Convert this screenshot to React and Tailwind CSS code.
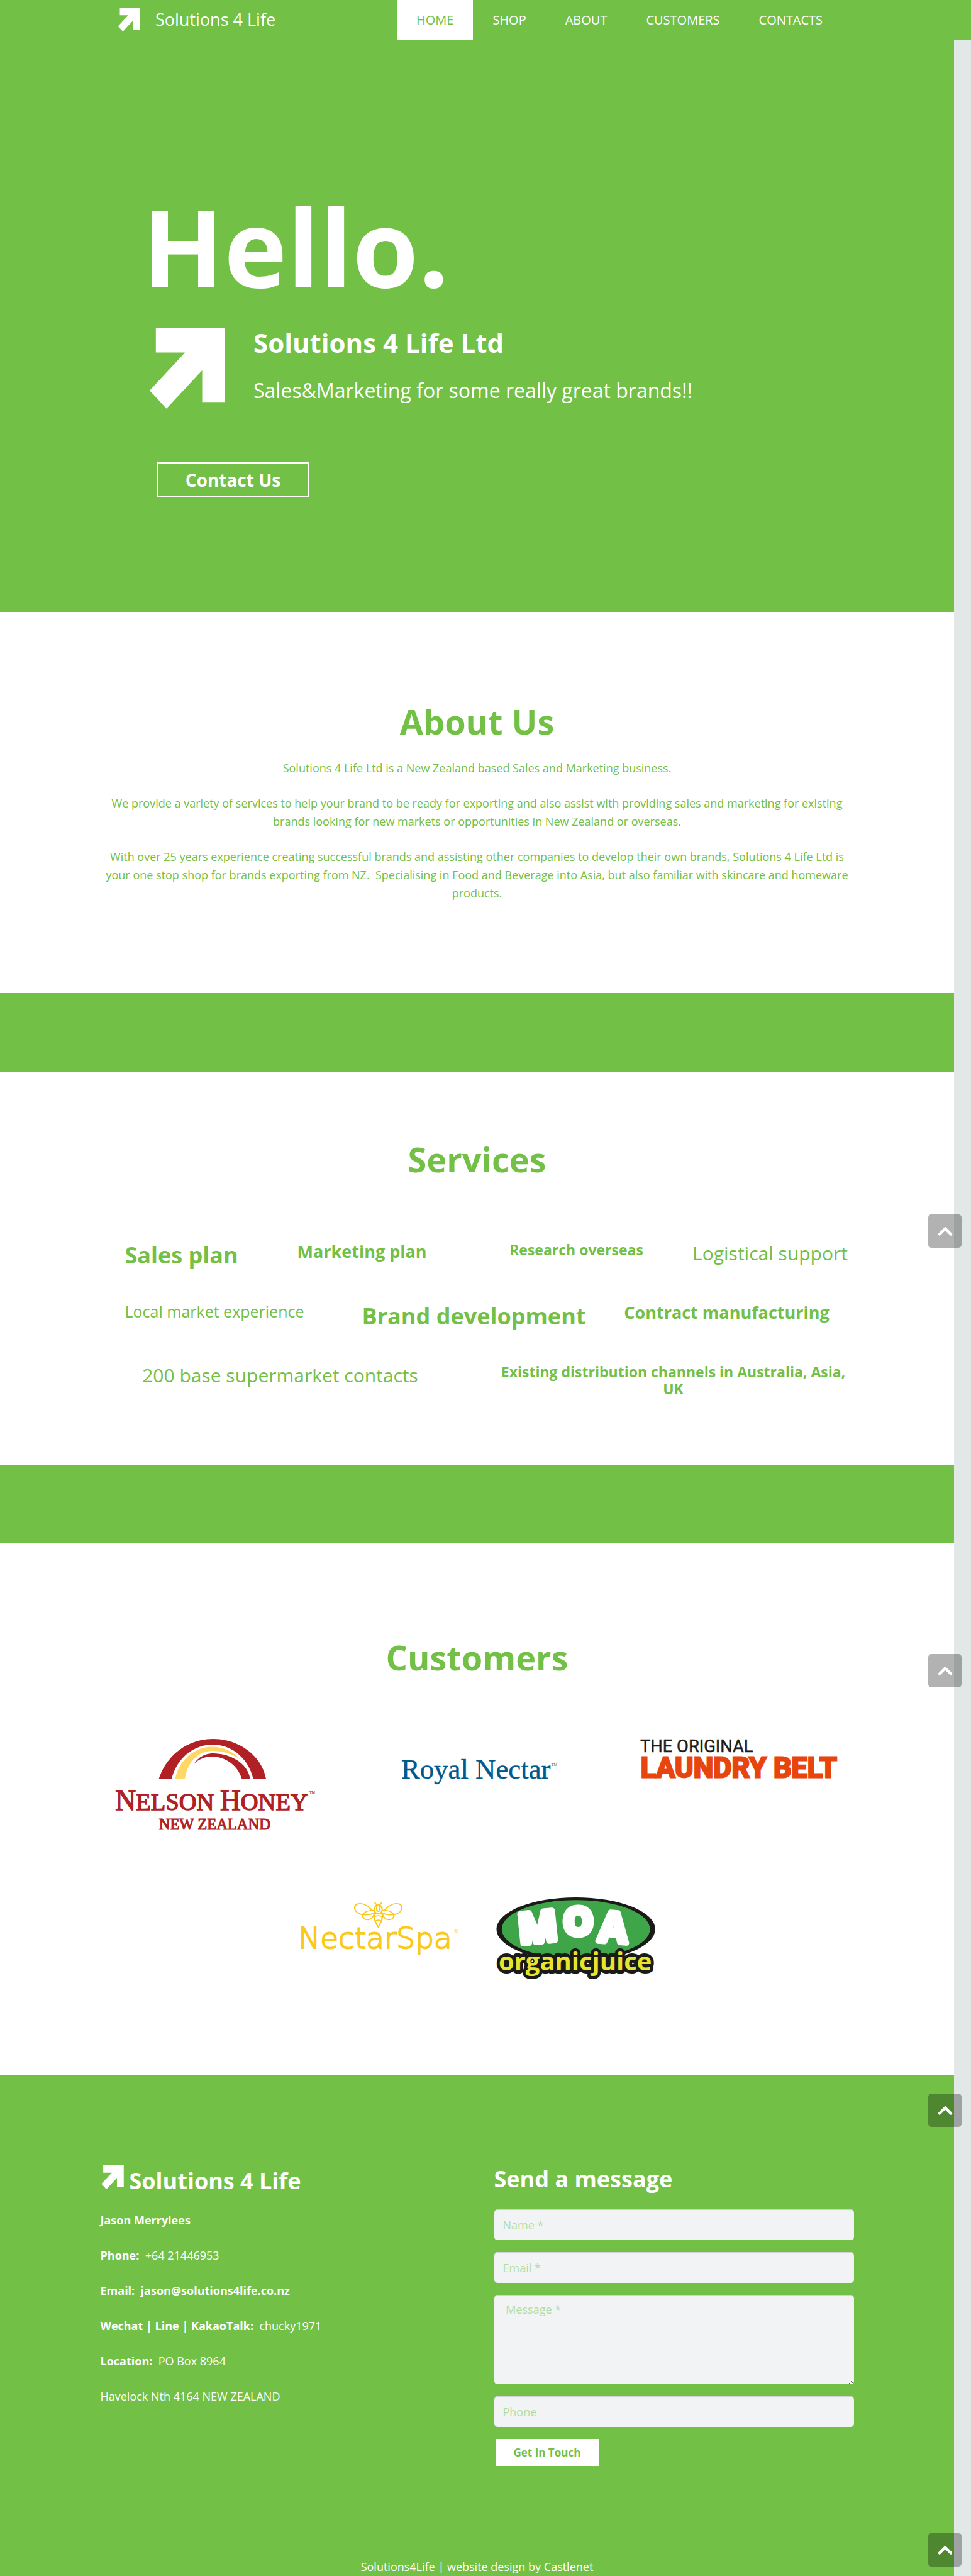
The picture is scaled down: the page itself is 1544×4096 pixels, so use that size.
import { ChevronUp } from "lucide-react";

const NAV = ["HOME", "SHOP", "ABOUT", "CUSTOMERS", "CONTACTS"];

function ArrowMark({ className }) {
  return (
    <svg viewBox="0 0 171 183" className={className} fill="#fff" aria-hidden="true">
      <path d="M14 0H171V168H119V96L38 183L0 142L80 56H14Z" />
    </svg>
  );
}

function Header() {
  return (
    <header className="flex h-[63px] bg-[#72c045] text-white">
      <a href="#home" className="flex w-[631px] items-center pl-[187px]">
        <ArrowMark className="h-[37px] w-[36px]" />
        <span className="ml-[24px] text-[27px]">Solutions 4 Life</span>
      </a>
      <nav className="flex">
        {NAV.map((item, i) => (
          <a
            key={item}
            href={"#" + item.toLowerCase()}
            className={
              i === 0
                ? "flex items-center bg-white px-[31px] text-[20px] text-[#72c045]"
                : "flex items-center px-[31px] text-[20px]"
            }
          >
            {item}
          </a>
        ))}
      </nav>
    </header>
  );
}

function Hero() {
  return (
    <section id="home" className="bg-[#72c045] pt-[244px] pb-[183px] pl-[226px] text-white">
      <h1 className="text-[170px] leading-[168px] font-bold">Hello.</h1>
      <div className="mt-[46px] ml-3 flex">
        <ArrowMark className="h-[129px] w-[120px]" />
        <div className="ml-[45px]">
          <h2 className="text-[42px] leading-[48px] font-bold">Solutions 4 Life Ltd</h2>
          <p className="mt-7 text-[32px] leading-[48px]">Sales&amp;Marketing for some really great brands!!</p>
        </div>
      </div>
      <a
        href="#contacts"
        className="mt-[85px] ml-6 flex h-[55px] w-[241px] items-center justify-center border-2 border-white text-[28px] font-bold"
      >
        Contact Us
      </a>
    </section>
  );
}

function Title({ children }) {
  return <h2 className="text-center text-[54px] leading-[64px] font-bold">{children}</h2>;
}

function About() {
  return (
    <section id="about" className="bg-white pt-[142px] pb-[144px]">
      <Title>About Us</Title>
      <div className="mx-auto mt-7 max-w-[1198px] space-y-[27px] text-center text-[18px] leading-[29px]">
        <p>Solutions 4 Life Ltd is a New Zealand based Sales and Marketing business.</p>
        <p>
          We provide a variety of services to help your brand to be ready for exporting and also assist with providing
          sales and marketing for existing brands looking for new markets or opportunities in New Zealand or overseas.
        </p>
        <p>
          With over 25 years experience creating successful brands and assisting other companies to develop their own
          brands, Solutions 4 Life Ltd is your one stop shop for brands exporting from NZ.&nbsp; Specialising in Food
          and Beverage into Asia, but also familiar with skincare and homeware products.
        </p>
      </div>
    </section>
  );
}

function Services() {
  return (
    <section id="shop" className="bg-white pt-[107px] pb-[107px]">
      <Title>Services</Title>
      <div className="mx-auto mt-[99px] max-w-[1198px] space-y-[54px] text-center">
        <div className="grid grid-cols-[258fr_316fr_366fr_258fr]">
          <h3 className="text-[36px] leading-[43px] font-bold">Sales plan</h3>
          <h3 className="text-[27px] leading-[32px] font-bold">Marketing plan</h3>
          <h3 className="text-[23px] leading-[27px] font-bold">Research overseas</h3>
          <p className="pr-2 text-[30px] leading-[37px] whitespace-nowrap">Logistical support</p>
        </div>
        <div className="grid grid-cols-[363fr_462fr_342fr_31fr]">
          <p className="text-[25px] leading-[29px]">Local market experience</p>
          <h3 className="text-[36px] leading-[43px] font-bold">Brand development</h3>
          <h3 className="text-[27px] leading-[32px] font-bold">Contract manufacturing</h3>
        </div>
        <div className="grid grid-cols-[572fr_54fr_570fr_2fr]">
          <p className="text-[30px] leading-[37px]">200 base supermarket contacts</p>
          <h3 className="col-start-3 text-[23px] leading-[27px] font-bold">
            Existing distribution channels in Australia, Asia, UK
          </h3>
        </div>
      </div>
    </section>
  );
}

function NelsonHoney() {
  return (
    <svg viewBox="0 0 451 210" className="w-[316px] overflow-visible" fill="#b12025" role="img" aria-label="Nelson Honey New Zealand">
      <path d="M98 90C116 35 165 0 221 0C280 0 331 38 341 90H312C300 42 262 13 220 13C175 13 138 46 127 90Z" />
      <path d="M135 90C143 50 178 18 218 18C246 18 268 30 282 46C265 34 243 27 218 27C184 29 163 54 157 90Z" fill="#ffd766" />
      <path d="M177 57C188 41 203 33 222 33C262 34 299 55 305 90H286C277 59 247 40 219 40C202 40 188 46 177 57Z" />
      <g fontFamily="'Liberation Serif', serif" stroke="#b12025" strokeWidth="2">
        <text x="-1" y="162" fontSize="55">
          <tspan fontSize="65">N</tspan>ELSON <tspan fontSize="65">H</tspan>ONEY
        </text>
        <text x="98" y="205" fontSize="35" strokeWidth="1.6">NEW ZEALAND</text>
        <text x="440" y="124" fontSize="8" strokeWidth="0.3">TM</text>
      </g>
    </svg>
  );
}

function RoyalNectar() {
  return (
    <svg viewBox="0 0 354 115" className="w-[248px] overflow-visible" fill="#005a8c" role="img" aria-label="Royal Nectar">
      <text x="4" y="90" fontSize="64" fontFamily="'Liberation Serif', serif" stroke="#005a8c" strokeWidth="0.6">
        Royal Nectar
      </text>
      <text x="345" y="61" fontSize="9" fontFamily="'Liberation Serif', serif">TM</text>
    </svg>
  );
}

function LaundryBelt() {
  return (
    <svg viewBox="0 0 451 105" className="w-[316px] overflow-visible" fontFamily="Roboto, sans-serif" role="img" aria-label="The Original Laundry Belt">
      <text x="0" y="30" fontSize="39" fill="#1d1d1b" stroke="#1d1d1b" strokeWidth="0.8">THE ORIGINAL</text>
      <text x="1" y="87" fontSize="64" fontWeight="bold" fill="#e8450e" stroke="#e8450e" strokeWidth="4">
        LAUNDRY BELT
      </text>
    </svg>
  );
}

function NectarSpa() {
  return (
    <svg viewBox="0 0 357 170" className="w-[250px] overflow-visible" fill="none" stroke="#fbc91b" role="img" aria-label="NectarSpa">
      <g transform="translate(109 -5) scale(0.4528 0.3333)" strokeWidth="7" strokeLinecap="round">
        <path d="M122 107C110 80 80 56 60 57C38 58 32 75 34 92C37 115 60 133 82 133C105 134 122 128 132 120" />
        <path d="M182 107C194 80 224 56 244 57C266 58 272 75 270 92C267 115 244 133 222 133C199 134 182 128 172 120" />
        <path d="M128 103C95 103 74 120 74 140C74 158 88 168 100 167C118 165 128 145 134 122" />
        <path d="M176 103C209 103 230 120 230 140C230 158 216 168 204 167C186 165 176 145 170 122" />
        <path d="M152 66C138 66 132 85 133 100C134 115 142 124 152 124C162 124 170 115 171 100C172 85 166 66 152 66Z" />
        <path d="M146 70C142 90 142 108 152 110C162 108 162 90 158 70" />
        <path d="M145 67L134 50M159 67L170 50" />
        <path d="M134 120C128 145 132 175 152 217C172 175 176 145 170 120C159 131 145 131 134 120Z" />
        <path d="M133 147C145 138 159 138 171 147M136 177C146 168 158 168 168 177" />
      </g>
      <text x="-4" y="116" fontSize="67" fill="#fbc91b" strokeWidth="2.8" fontFamily="'DejaVu Sans', sans-serif" fontWeight="200">
        NectarSpa
      </text>
      <text x="349" y="80" fontSize="11" fill="#fbc91b" stroke="none" fontFamily="'DejaVu Sans', sans-serif">®</text>
    </svg>
  );
}

function MoaJuice() {
  return (
    <svg viewBox="0 0 362 194" className="w-[254px] overflow-visible" role="img" aria-label="Moa organic juice">
      <ellipse cx="182" cy="72" rx="180" ry="72" fill="#1a1a18" />
      <ellipse cx="182" cy="72" rx="168" ry="66" fill="#3ea548" />
      <g fontFamily="'Open Sans', sans-serif" fontWeight="700" fill="#fff" stroke="#fff" strokeWidth="14" strokeLinejoin="round">
        <text x="55" y="105" rotate="-6" fontSize="94">M</text>
        <text x="154" y="84" fontSize="84">O</text>
        <text x="232" y="99" rotate="4" fontSize="94" strokeWidth="12">A</text>
      </g>
      <text
        x="7"
        y="165"
        fontFamily="'Open Sans', sans-serif"
        fontWeight="700"
        fontSize="57"
        fill="#e6e52c"
        stroke="#1a1a18"
        strokeWidth="14"
        strokeLinejoin="round"
        paintOrder="stroke"
      >
        organicjuice
      </text>
    </svg>
  );
}

function Customers() {
  return (
    <section id="customers" className="bg-white pt-[149px] pb-[147px]">
      <Title>Customers</Title>
      <div className="mx-auto mt-[98px] grid max-w-[1251px] grid-cols-12 gap-y-[105px]">
        <div className="col-span-4 flex items-start justify-center"><NelsonHoney /></div>
        <div className="col-span-4 flex items-start justify-center"><RoyalNectar /></div>
        <div className="col-span-4 flex items-start justify-center"><LaundryBelt /></div>
        <div className="col-span-3 col-start-4 flex items-start justify-center"><NectarSpa /></div>
        <div className="col-span-3 flex items-start justify-center"><MoaJuice /></div>
      </div>
    </section>
  );
}

const FIELD =
  "block w-full rounded-[5px] bg-[#f1f3f5] px-[14px] text-[18px] text-[#72c045] shadow-[inset_0_1px_1px_rgba(0,0,0,0.15)] placeholder:text-[#b3dd9f]";

function Footer() {
  return (
    <footer id="contacts" className="bg-[#72c045] pt-[143px] text-white">
      <div className="mx-auto grid max-w-[1198px] grid-cols-[626fr_572fr]">
        <div>
          <h2 className="flex items-start text-[36px] leading-[44px] font-bold">
            <ArrowMark className="mr-[8px] h-[38px] w-[38px]" />
            <span className="pt-[3px]">Solutions 4 Life</span>
          </h2>
          <div className="mt-[26px] space-y-[27px] text-[18px] leading-[29px]">
            <p className="font-bold">Jason Merrylees</p>
            <p><b>Phone:</b>&nbsp; +64 21446953</p>
            <p className="font-bold">
              Email:&nbsp; <a href="mailto:jason@solutions4life.co.nz">jason@solutions4life.co.nz</a>
            </p>
            <p><b>Wechat | Line | KakaoTalk:</b>&nbsp; chucky1971</p>
            <p><b>Location:</b>&nbsp; PO Box 8964</p>
            <p>Havelock Nth 4164 NEW ZEALAND</p>
          </div>
        </div>
        <form onSubmit={(e) => e.preventDefault()}>
          <h2 className="text-[36px] leading-[44px] font-bold">Send a message</h2>
          <div className="mt-[26px] space-y-[19px]">
            <input aria-label="Name" placeholder="Name *" className={FIELD + " h-[49px]"} />
            <input aria-label="Email" type="email" placeholder="Email *" className={FIELD + " h-[49px]"} />
            <textarea aria-label="Message" placeholder=" Message *" className={FIELD + " h-[142px] pt-[10px]"} />
            <input aria-label="Phone" type="tel" placeholder="Phone" className={FIELD + " h-[49px]"} />
            <button type="submit" className="ml-[2px] h-[43px] bg-white px-[29px] text-[17px] font-bold text-[#72c045]">
              Get In Touch
            </button>
          </div>
        </form>
      </div>
      <p className="mt-[146px] text-center text-[18px] leading-[29px]">Solutions4Life | website design by Castlenet</p>
    </footer>
  );
}

const SCROLL_TOPS = ["top-[1931px]", "top-[2630px]", "top-[3329px]", "top-[4028px]"];

export default function App() {
  return (
    <div className="relative bg-[#e2e8e8] font-['Open_Sans',sans-serif]">
      <Header />
      <main className="mr-[27px] text-[#72c045]">
        <Hero />
        <About />
        <div className="h-[125px] bg-[#72c045]" />
        <Services />
        <div className="h-[125px] bg-[#72c045]" />
        <Customers />
        <Footer />
      </main>
      {SCROLL_TOPS.map((top) => (
        <button
          key={top}
          type="button"
          aria-label="Back to top"
          className={"absolute right-[15px] flex h-[53px] w-[53px] items-center justify-center rounded-[5px] bg-black/30 text-white " + top}
        >
          <ChevronUp size={36} strokeWidth={3} />
        </button>
      ))}
    </div>
  );
}
